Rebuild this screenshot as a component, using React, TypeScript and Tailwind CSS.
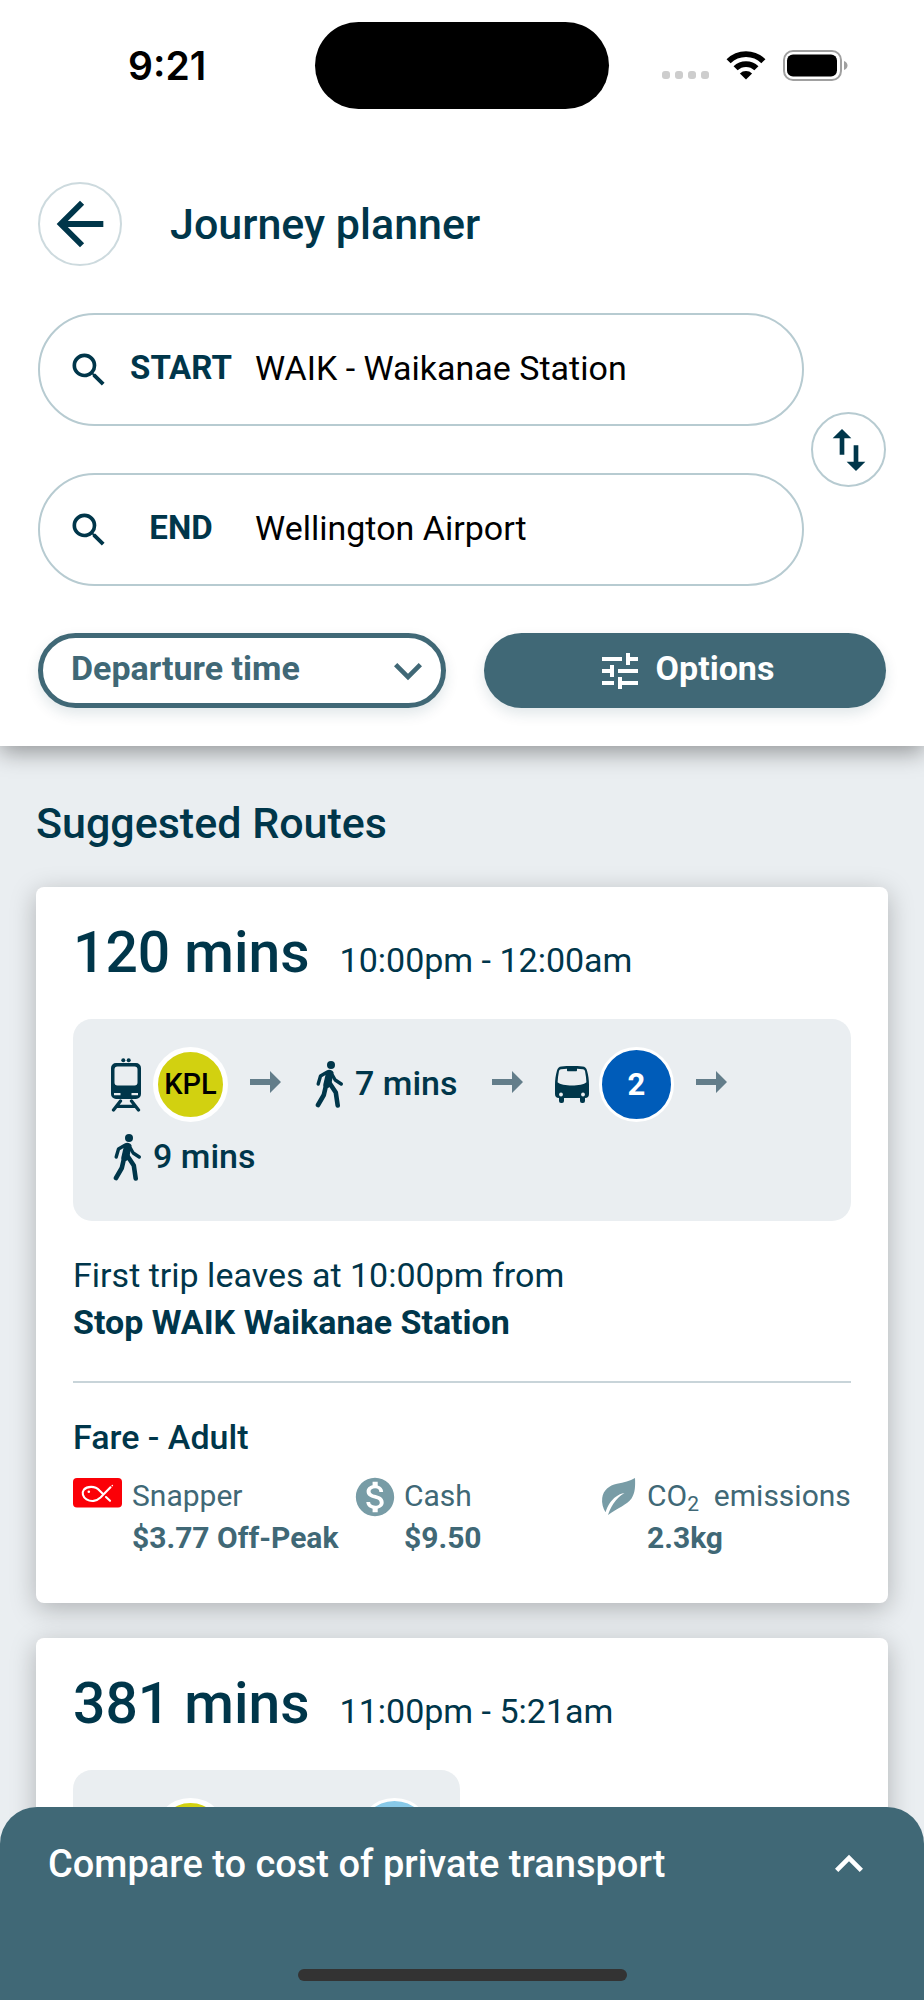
import type { ReactNode } from "react";
import {
  MdArrowBack,
  MdExpandLess,
  MdExpandMore,
  MdMonetizationOn,
  MdSearch,
  MdSwapVert,
  MdTune,
} from "react-icons/md";

function StatusBar() {
  return (
    <div className="relative flex h-[131px] items-center justify-between pr-[76px] pl-[128px] text-black">
      <time className="font-['Inter',sans-serif] text-[39px] leading-[48px] font-semibold">9:21</time>
      <div className="absolute top-[22px] left-1/2 h-[87px] w-[294px] -translate-x-1/2 rounded-full bg-black" />
      <div className="flex items-center gap-[17px]">
        <svg width="47" height="31" viewBox="0 0 47 31" fill="#cdcdcd" aria-hidden="true">
          <rect x="0" y="21" width="8" height="8" rx="3" />
          <rect x="13" y="21" width="8" height="8" rx="3" />
          <rect x="26" y="21" width="8" height="8" rx="3" />
          <rect x="39" y="21" width="8" height="8" rx="3" />
        </svg>
        <svg width="40" height="29" viewBox="0 0 40 29" aria-hidden="true">
          <path d="M20 28.6 13.9 22.4a8.7 8.7 0 0 1 12.2 0z" />
          <path d="M9.6 17.3a14.8 14.8 0 0 1 20.8 0" fill="none" stroke="#000" strokeWidth="5.8" />
          <path d="M2.6 10.2a24.7 24.7 0 0 1 34.8 0" fill="none" stroke="#000" strokeWidth="5.8" />
        </svg>
        <svg width="65" height="31" viewBox="0 0 65 31" aria-hidden="true">
          <rect x="1" y="1" width="57" height="29" rx="9" fill="none" stroke="#a0a0a0" strokeWidth="2" />
          <rect x="4" y="4.5" width="50" height="22" rx="6" />
          <path d="M61 11c2.200.8 3.500 2.600 3.500 4.500s-1.300 3.700-3.500 4.500z" fill="#a0a0a0" />
        </svg>
      </div>
    </div>
  );
}

function Field({ id, label, value }: { id: string; label: string; value: string }) {
  return (
    <div className="flex h-[113px] items-center rounded-full border-2 border-[#b7cbd1] pr-10 pl-[27px]">
      <MdSearch className="size-11 shrink-0 text-[#00364a]" aria-hidden="true" />
      <label htmlFor={id} className="ml-4 w-[108px] shrink-0 pb-1 text-center text-[33px] leading-[44px] font-bold">
        {label}
      </label>
      <input
        id={id}
        type="text"
        defaultValue={value}
        className="ml-5 min-w-0 flex-1 bg-transparent pb-1 text-[34px] leading-[44px] text-black outline-none"
      />
    </div>
  );
}

function WalkIcon() {
  return (
    <svg width="30" height="47" viewBox="0 0 30 47" fill="none" stroke="currentColor" strokeLinecap="round" strokeLinejoin="round" aria-hidden="true">
      <circle cx="18" cy="4" r="4" fill="currentColor" stroke="none" />
      <path d="M13.500 9.500c2.500-1.500 6-.8 7 2l-2 11c-.5 2-1.500 4.500-4.500 4.500s-4-2-3.600-4z" fill="currentColor" stroke="none" />
      <path d="M13.500 11.500 7.500 15l-2.300 8" strokeWidth="3.400" />
      <path d="M18.500 12.500l3.700 6.500 6 4" strokeWidth="3.400" />
      <path d="M16.500 22l6.300 9.500 1.900 13" strokeWidth="4.600" />
      <path d="M13 24.500 10.800 34 5 44" strokeWidth="4.600" />
    </svg>
  );
}

function TrainIcon() {
  return (
    <svg width="30" height="54" viewBox="0 0 30 54" fill="currentColor" aria-hidden="true">
      <circle cx="12.300" cy="2.200" r="2" />
      <circle cx="17.700" cy="2.200" r="2" />
      <path
        fillRule="evenodd"
        d="M5 5h20a5 5 0 0 1 5 5v26a5 5 0 0 1-5 5H5a5 5 0 0 1-5-5V10a5 5 0 0 1 5-5zm1.500 3.500A3 3 0 0 0 3.500 11.500v13a3 3 0 0 0 3 3h17a3 3 0 0 0 3-3v-13a3 3 0 0 0-3-3zM3 35v2.300h6.500V35zm17.500 0v2.300H27V35z"
      />
      <path d="M9.500 43 2.500 52M20.500 43l7 9M6 48.300h18" fill="none" stroke="currentColor" strokeWidth="3.300" strokeLinecap="round" />
    </svg>
  );
}

function BusIcon() {
  return (
    <svg width="34" height="37" viewBox="0 0 34 37" fill="currentColor" aria-hidden="true">
      <path d="M4 29h5v6a2 2 0 0 1-2 2H6a2 2 0 0 1-2-2zM25 29h5v6a2 2 0 0 1-2 2h-1a2 2 0 0 1-2-2z" />
      <path
        fillRule="evenodd"
        d="M6.500.4C13 0 21 0 27.500.4c2.500.2 4 1.600 4.500 4.100C33.300 9 34 14 34 19v9a4 4 0 0 1-4 4H4a4 4 0 0 1-4-4v-9C0 14 .7 9 2 4.500 2.500 2 4 .6 6.500.4zM6 3.200c-1 .1-1.700.8-2 1.900C3.200 9 2.800 12.500 2.600 16.300c4.400 4.300 24.400 4.300 28.800 0C31.200 12.500 30.800 9 30 5.100c-.3-1.100-1-1.800-2-1.900-2-.3-4-.4-6-.5v1.500c0 .6-.4 1-1 1h-8c-.6 0-1-.4-1-1V2.700c-2 .1-4 .2-6 .5z"
      />
      <circle cx="6" cy="28.500" r="1.900" fill="#eaeef1" />
      <circle cx="28" cy="28.500" r="1.900" fill="#eaeef1" />
    </svg>
  );
}

function LegArrow() {
  return (
    <svg className="ml-[22px] shrink-0" width="31" height="27" viewBox="0 0 31 27" fill="#637d8a" aria-hidden="true">
      <path d="M0 8h20V0l11 11-11 11v-8H0z" />
    </svg>
  );
}

function Leg({ icon, arrow, children }: { icon: ReactNode; arrow?: boolean; children: ReactNode }) {
  return (
    <li className="flex items-center">
      <span className="shrink-0">{icon}</span>
      {children}
      {arrow && <LegArrow />}
    </li>
  );
}

function Duration({ children }: { children: ReactNode }) {
  return (
    <span className="ml-3 min-w-[115px] pb-1 text-[34px] leading-[42px] font-medium whitespace-nowrap">
      {children}
    </span>
  );
}

const badge = "flex size-[75px] items-center justify-center rounded-full border-white leading-none";

function TrainBadge({ line }: { line?: string }) {
  return (
    <span className={`${badge} ml-3 border-5 bg-[#d2d110] text-[29px] font-medium text-black`}>{line}</span>
  );
}

function RouteCard({
  duration,
  times,
  legs,
  children,
}: {
  duration: string;
  times: string;
  legs: ReactNode;
  children?: ReactNode;
}) {
  return (
    <article className="rounded-lg bg-white px-[37px] pt-[34px] pb-11 shadow-[0_6px_26px_rgba(0,0,0,0.25)]">
      <div className="flex items-baseline gap-[30px]">
        <h3 className="text-[57px] leading-[64px] font-medium">{duration}</h3>
        <p className="text-[34px] leading-[44px]">{times}</p>
      </div>
      <ol className="mt-[34px] flex w-fit max-w-full flex-wrap items-center gap-x-8 gap-y-3 rounded-[19px] bg-[#eaeef1] pt-7 pr-7 pb-10 pl-[38px]">
        {legs}
      </ol>
      {children}
    </article>
  );
}

function FareItem({ icon, label, value }: { icon: ReactNode; label: ReactNode; value: string }) {
  return (
    <div className="flex gap-2.5 text-[30px] leading-[42px] whitespace-nowrap text-[#406876]">
      <span className="mt-[3px] shrink-0">{icon}</span>
      <dl>
        <dt>{label}</dt>
        <dd className="font-bold">{value}</dd>
      </dl>
    </div>
  );
}

function SnapperLogo() {
  return (
    <svg width="49" height="30" viewBox="0 0 49 30" aria-hidden="true">
      <rect width="49" height="29.500" rx="4" fill="#fb0007" />
      <path
        d="M37.500 9.300 27.500 19.500C23.500 23.300 18 24 13.500 21.300 9.700 19 8.700 14.500 10.800 11.800 14 8 22 7.500 26.500 12.500l4 4M33 19l4 3.800"
        fill="none"
        stroke="#fff"
        strokeWidth="2.100"
        strokeLinecap="round"
      />
      <circle cx="15.800" cy="13.800" r="1.300" fill="#fff" />
      <circle cx="39.300" cy="7.600" r=".8" fill="#fff" />
    </svg>
  );
}

function LeafIcon() {
  return (
    <svg width="38" height="38" viewBox="0 0 38 38" aria-hidden="true">
      <path
        d="M36 0c.4 8 .2 15-3.500 20.500C28 27 19 29.500 9 37c1-3 2.500-7 5.500-11.500 3-4.500 6-7.500 11-10.600-6.500 1-11.500 5.600-14.500 9.800-2 3-3.300 6-4.500 9.500C4 30 2.500 25 3.200 20 4.500 12 10 7.500 18 5.800 25 4.500 31 3 36 0z"
        fill="#789ca6"
      />
    </svg>
  );
}

export default function App() {
  return (
    <div className="flex h-screen flex-col overflow-hidden bg-[#eaeef1] font-['Roboto',sans-serif] text-[#00364a]">
      <header className="relative z-10 shrink-0 bg-white pb-[38px] shadow-[0_6px_22px_rgba(0,0,0,0.38)]">
        <StatusBar />
        <div className="mt-[51px] flex items-center gap-12 px-[38px]">
          <button
            type="button"
            aria-label="Back"
            className="flex size-[84px] items-center justify-center rounded-full border-2 border-[#cddade]"
          >
            <MdArrowBack className="size-[70px] shrink-0" aria-hidden="true" />
          </button>
          <h1 className="text-[43px] leading-[50px] font-medium">Journey planner</h1>
        </div>

        <form className="mt-[47px] px-[38px]">
          <div className="flex items-center gap-[7px]">
            <div className="flex min-w-0 flex-1 flex-col gap-[47px]">
              <Field id="start" label="START" value="WAIK - Waikanae Station" />
              <Field id="end" label="END" value="Wellington Airport" />
            </div>
            <button
              type="button"
              aria-label="Swap start and end"
              className="flex size-[75px] shrink-0 items-center justify-center rounded-full border-2 border-[#b7cbd1]"
            >
              <MdSwapVert className="size-14 shrink-0" aria-hidden="true" />
            </button>
          </div>

          <div className="mt-[47px] grid grid-cols-[408fr_402fr] gap-[38px]">
            <div className="relative">
              <select
                aria-label="Departure time"
                className="h-[75px] w-full appearance-none rounded-full border-5 border-[#406876] bg-white pr-20 pb-1 pl-7 text-[34px] font-bold text-[#406876] shadow-[0_6px_14px_rgba(0,54,74,0.12)]"
              >
                <option>Departure time</option>
                <option>Arrival time</option>
              </select>
              <MdExpandMore
                className="pointer-events-none absolute top-2.5 right-2.5 size-14 text-[#406876]"
                aria-hidden="true"
              />
            </div>
            <button
              type="button"
              className="flex h-[75px] items-center justify-center gap-3 rounded-full bg-[#406876] text-[34px] font-bold text-white shadow-[0_6px_14px_rgba(0,54,74,0.12)]"
            >
              <MdTune className="size-12" aria-hidden="true" />
              <span className="pb-1">Options</span>
            </button>
          </div>
        </form>
      </header>

      <main className="min-h-0 flex-1 overflow-y-auto px-9 pt-[52px] [scrollbar-width:none]">
        <h2 className="text-[43px] leading-[50px] font-medium">Suggested Routes</h2>
        <div className="mt-[39px] flex flex-col gap-[35px] pb-16">
          <RouteCard
            duration="120 mins"
            times="10:00pm - 12:00am"
            legs={
              <>
                <Leg icon={<TrainIcon />} arrow>
                  <TrainBadge line="KPL" />
                </Leg>
                <Leg icon={<WalkIcon />} arrow>
                  <Duration>7 mins</Duration>
                </Leg>
                <Leg icon={<BusIcon />} arrow>
                  <span className={`${badge} ml-2.5 border-3 bg-[#005cb9] text-[31px] font-bold text-white`}>2</span>
                </Leg>
                <Leg icon={<WalkIcon />}>
                  <Duration>9 mins</Duration>
                </Leg>
              </>
            }
          >
            <p className="mt-[31px] text-[34px] leading-[47px]">
              First trip leaves at 10:00pm from
              <strong className="block font-bold">Stop WAIK Waikanae Station</strong>
            </p>
            <hr className="mt-[35px] border-t-2 border-[#c8d4d9]" />
            <h4 className="mt-[31px] text-[34px] leading-[47px] font-medium">Fare - Adult</h4>
            <div className="mt-3.5 grid grid-cols-[283fr_243fr_252fr]">
              <FareItem icon={<SnapperLogo />} label="Snapper" value="$3.77 Off-Peak" />
              <FareItem
                icon={<MdMonetizationOn className="-m-1 size-[46px] text-[#789ca6]" aria-hidden="true" />}
                label="Cash"
                value="$9.50"
              />
              <FareItem
                icon={<LeafIcon />}
                label={
                  <>
                    CO<sub className="text-[21px] leading-none">2</sub>&nbsp; emissions
                  </>
                }
                value="2.3kg"
              />
            </div>
          </RouteCard>

          <RouteCard
            duration="381 mins"
            times="11:00pm - 5:21am"
            legs={
              <>
                <Leg icon={<TrainIcon />} arrow>
                  <TrainBadge />
                </Leg>
                <Leg icon={<BusIcon />}>
                  <span className={`${badge} ml-2.5 border-3 bg-[#88c9e8]`} />
                </Leg>
              </>
            }
          />
        </div>
      </main>

      <footer className="relative z-10 -mt-[37px] flex h-[193px] shrink-0 flex-col items-center justify-between rounded-t-[37px] bg-[#406876] pb-[19px] text-white">
        <button
          type="button"
          className="flex w-full items-center justify-between pt-[29px] pr-[47px] pl-12 text-left text-[38px] leading-[54px] font-medium"
        >
          Compare to cost of private transport
          <MdExpandLess className="size-14 shrink-0" aria-hidden="true" />
        </button>
        <div className="h-3 w-[329px] rounded-full bg-[#333333]" />
      </footer>
    </div>
  );
}
